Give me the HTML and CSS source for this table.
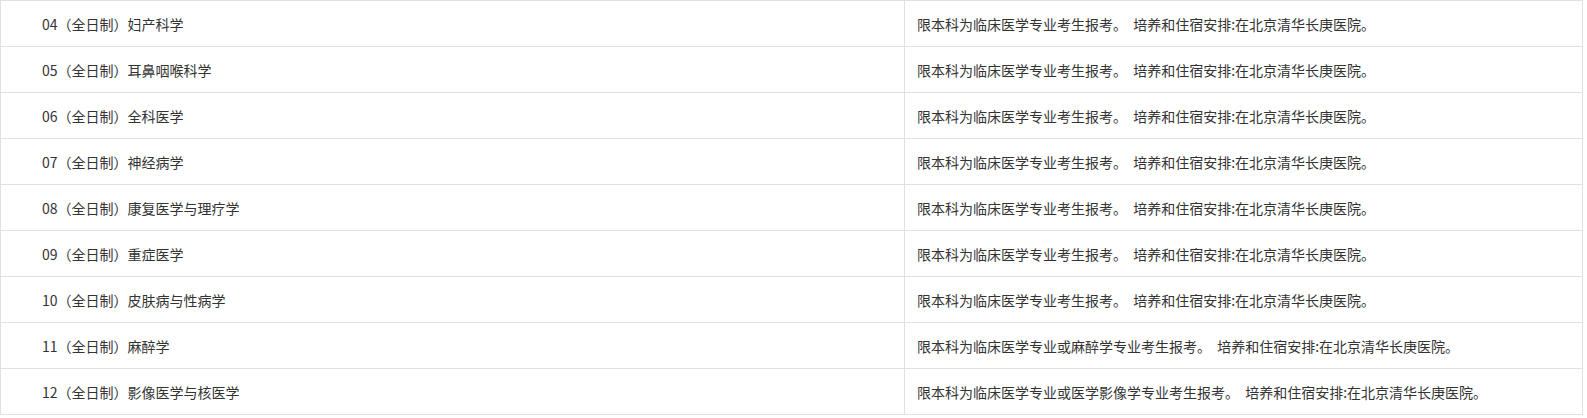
FILE: index.html
```html
<!DOCTYPE html>
<html lang="zh-CN">
<head>
<meta charset="utf-8">
<link rel="stylesheet" href="styles.css">
</head>
<body>
<table class="plan">
  <colgroup><col class="c1"><col class="c2"></colgroup>
  <tbody>
    <tr><td class="name">04（全日制）妇产科学</td><td class="note">限本科为临床医学专业考生报考。 培养和住宿安排:在北京清华长庚医院。</td></tr>
    <tr><td class="name">05（全日制）耳鼻咽喉科学</td><td class="note">限本科为临床医学专业考生报考。 培养和住宿安排:在北京清华长庚医院。</td></tr>
    <tr><td class="name">06（全日制）全科医学</td><td class="note">限本科为临床医学专业考生报考。 培养和住宿安排:在北京清华长庚医院。</td></tr>
    <tr><td class="name">07（全日制）神经病学</td><td class="note">限本科为临床医学专业考生报考。 培养和住宿安排:在北京清华长庚医院。</td></tr>
    <tr><td class="name">08（全日制）康复医学与理疗学</td><td class="note">限本科为临床医学专业考生报考。 培养和住宿安排:在北京清华长庚医院。</td></tr>
    <tr><td class="name">09（全日制）重症医学</td><td class="note">限本科为临床医学专业考生报考。 培养和住宿安排:在北京清华长庚医院。</td></tr>
    <tr><td class="name">10（全日制）皮肤病与性病学</td><td class="note">限本科为临床医学专业考生报考。 培养和住宿安排:在北京清华长庚医院。</td></tr>
    <tr><td class="name">11（全日制）麻醉学</td><td class="note">限本科为临床医学专业或麻醉学专业考生报考。 培养和住宿安排:在北京清华长庚医院。</td></tr>
    <tr><td class="name">12（全日制）影像医学与核医学</td><td class="note">限本科为临床医学专业或医学影像学专业考生报考。 培养和住宿安排:在北京清华长庚医院。</td></tr>
  </tbody>
</table>
</body>
</html>
```
FILE: styles.css
```css
html, body {
  margin: 0;
  padding: 0;
  background: #ffffff;
}
.plan {
  border-collapse: collapse;
  table-layout: fixed;
  width: 1583px;
  font-family: "Noto Sans CJK SC", "Microsoft YaHei", sans-serif;
  font-size: 14px;
  color: #333333;
}
.c1 { width: 904px; }
.plan td {
  border: 1px solid #dfe1e6;
  height: 46px;
  padding: 0;
  box-sizing: border-box;
  vertical-align: middle;
  line-height: 20px;
  white-space: nowrap;
}
.plan td.name { padding-left: 41px; }
.plan td.note { padding-left: 12px; word-spacing: 3px; }
```
